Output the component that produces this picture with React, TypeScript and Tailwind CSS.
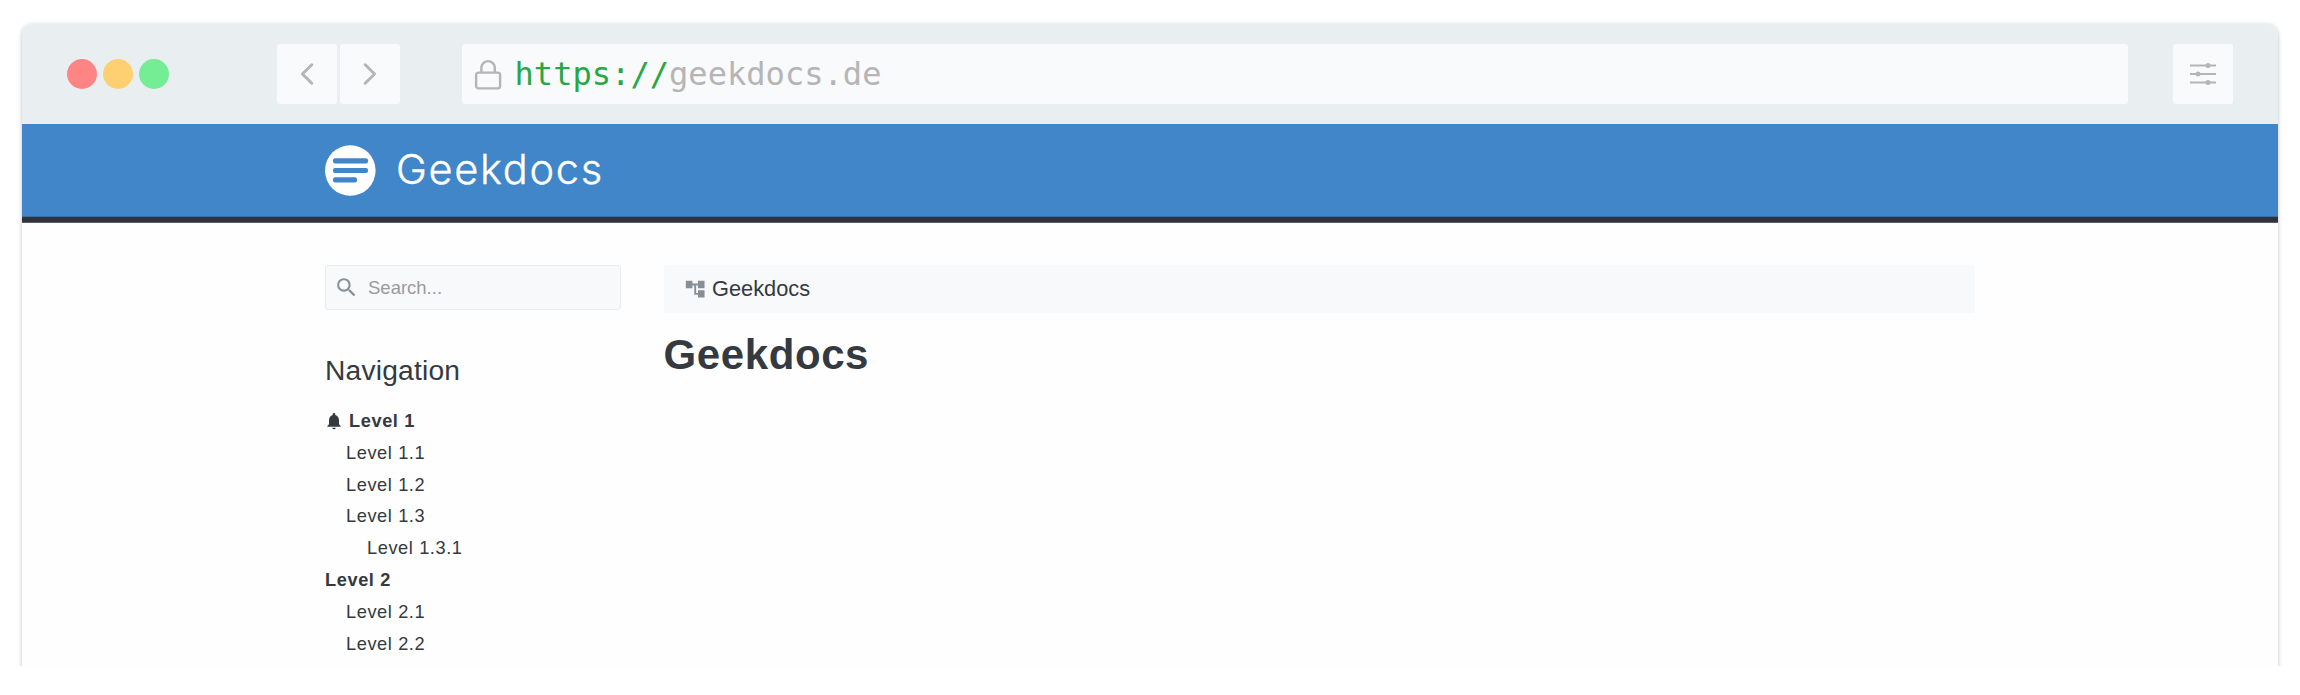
import { MdAccountTree, MdNotifications, MdSearch } from "react-icons/md";

type NavItem = { label: string; level: 0 | 1 | 2; bell?: boolean };

const navItems: NavItem[] = [
  { label: "Level 1", level: 0, bell: true },
  { label: "Level 1.1", level: 1 },
  { label: "Level 1.2", level: 1 },
  { label: "Level 1.3", level: 1 },
  { label: "Level 1.3.1", level: 2 },
  { label: "Level 2", level: 0 },
  { label: "Level 2.1", level: 1 },
  { label: "Level 2.2", level: 1 },
];

const indents = ["font-bold", "pl-[21px]", "pl-[42px]"];

function Toolbar() {
  return (
    <div className="flex h-[100px] shrink-0 items-center rounded-t-[10px] bg-[#e9eff1] pr-[45px] pl-[45px]">
      <div className="flex gap-1.5">
        <span className="size-[30px] rounded-full bg-[#ff8585]" />
        <span className="size-[30px] rounded-full bg-[#ffd071]" />
        <span className="size-[30px] rounded-full bg-[#74ed94]" />
      </div>
      <div className="ml-[108px] flex gap-[3px]">
        <button className="size-[60px] rounded-[3px] bg-[#f9fafc]" aria-label="Back">
          <svg viewBox="0 0 60 60" className="size-[60px]" fill="none" stroke="#b5b5b5" strokeWidth="3" strokeLinecap="round" strokeLinejoin="round">
            <path d="M34.8 20.8 25.4 30l9.4 9.2" />
          </svg>
        </button>
        <button className="size-[60px] rounded-[3px] bg-[#f9fafc]" aria-label="Forward">
          <svg viewBox="0 0 60 60" className="size-[60px]" fill="none" stroke="#b5b5b5" strokeWidth="3" strokeLinecap="round" strokeLinejoin="round">
            <path d="M25.2 20.8 34.6 30l-9.4 9.2" />
          </svg>
        </button>
      </div>
      <div className="ml-[62px] flex h-[60px] w-[1666px] items-center rounded-[3px] bg-[#f9fafc] pl-3">
        <svg viewBox="0 0 28 32" className="mt-[1px] h-8 w-7" fill="none" stroke="#b5b5b5" strokeWidth="2.4">
          <rect x="2.1" y="13.6" width="24" height="15.8" rx="2.4" />
          <path d="M7.4 13.6V8.8a6.7 6.7 0 0 1 13.4 0v4.8" />
        </svg>
        <span className="ml-[12.5px] font-['DejaVu_Sans_Mono',monospace] text-[32.1px] leading-[60px] whitespace-pre text-[#b5b5b5]">
          <span className="text-[#28a745]">https://</span>geekdocs.de
        </span>
      </div>
      <button className="ml-[45px] size-[60px] rounded-[3px] bg-[#f9fafc]" aria-label="Settings">
        <svg viewBox="0 0 60 60" className="size-[60px]" fill="#b5b5b5" stroke="#b5b5b5" strokeWidth="2">
          <path d="M17 21.5h26M17 30h26M17 38.5h26" />
          <g stroke="none">
            <circle cx="35" cy="21.5" r="2.5" />
            <circle cx="25" cy="30" r="2.5" />
            <circle cx="35" cy="38.5" r="2.5" />
          </g>
        </svg>
      </button>
    </div>
  );
}

function SiteHeader() {
  return (
    <header className="shrink-0">
      <div className="flex h-[92px] items-center bg-[#4186c9] pl-[303px]">
        <svg viewBox="0 0 51 51" className="size-[51px]">
          <circle cx="25.3" cy="25.5" r="25.3" fill="#fff" />
          <g fill="#4186c9">
            <rect x="8" y="13.2" width="35" height="5.2" rx="2" />
            <rect x="8" y="22.9" width="35" height="5.2" rx="2" />
            <rect x="8" y="32.2" width="24" height="5.2" rx="2" />
          </g>
        </svg>
        <span className="-mt-[3px] ml-[20px] font-['Inter',sans-serif] text-[41.5px] leading-[50px] font-light tracking-[1.7px] text-white [-webkit-text-stroke:0.4px_white]">
          Geekdocs
        </span>
      </div>
      <div className="h-px bg-[#366fa6]" />
      <div className="h-[5px] bg-[#2f333e]" />
      <div className="h-px bg-[#5d5d65]" />
    </header>
  );
}

function Sidebar() {
  return (
    <aside className="w-[296px]">
      <div className="flex h-[45px] items-center rounded-[3px] border border-[#e9ecef] bg-[#f8f9fb] pl-2">
        <MdSearch className="size-[25px] text-[#868e96]" />
        <span className="ml-[9px] text-[18.5px] leading-[24px] text-[#999b9e]">Search...</span>
      </div>
      <h2 className="mt-[42px] text-[28.2px] leading-[36px] tracking-[0.2px]">Navigation</h2>
      <ul className="mt-[17.5px] text-[18.2px] tracking-[0.6px]">
        {navItems.map((item) => (
          <li key={item.label} className={`flex h-[31.87px] items-center ${indents[item.level]}`}>
            {item.bell && <MdNotifications className="-ml-px mr-[5px] size-[20px]" />}
            {item.label}
          </li>
        ))}
      </ul>
    </aside>
  );
}

export default function App() {
  return (
    <div className="h-[695px] w-[2300px] bg-white font-['Liberation_Sans',Arial,sans-serif] text-[#343a40]">
      <div className="h-[666px] overflow-hidden px-[22px] pt-6">
        <div className="flex h-[700px] flex-col rounded-t-[10px] bg-[#fefefe] shadow-[0_1px_4px_rgba(0,0,0,0.25)]">
          <Toolbar />
          <SiteHeader />
          <div className="flex pt-[42px] pl-[303px]">
            <Sidebar />
            <main className="ml-[42.5px] w-[1311.5px]">
              <div className="flex h-[48px] items-center rounded-[3px] bg-[#f8f9fb] pl-[20.5px]">
                <MdAccountTree className="size-[22.4px] text-[#868e96]" />
                <span className="ml-[5.6px] text-[21.8px] leading-[30px]">Geekdocs</span>
              </div>
              <h1 className="mt-[17px] text-[42px] leading-[50px] font-bold tracking-[0.6px]">Geekdocs</h1>
            </main>
          </div>
        </div>
      </div>
    </div>
  );
}
